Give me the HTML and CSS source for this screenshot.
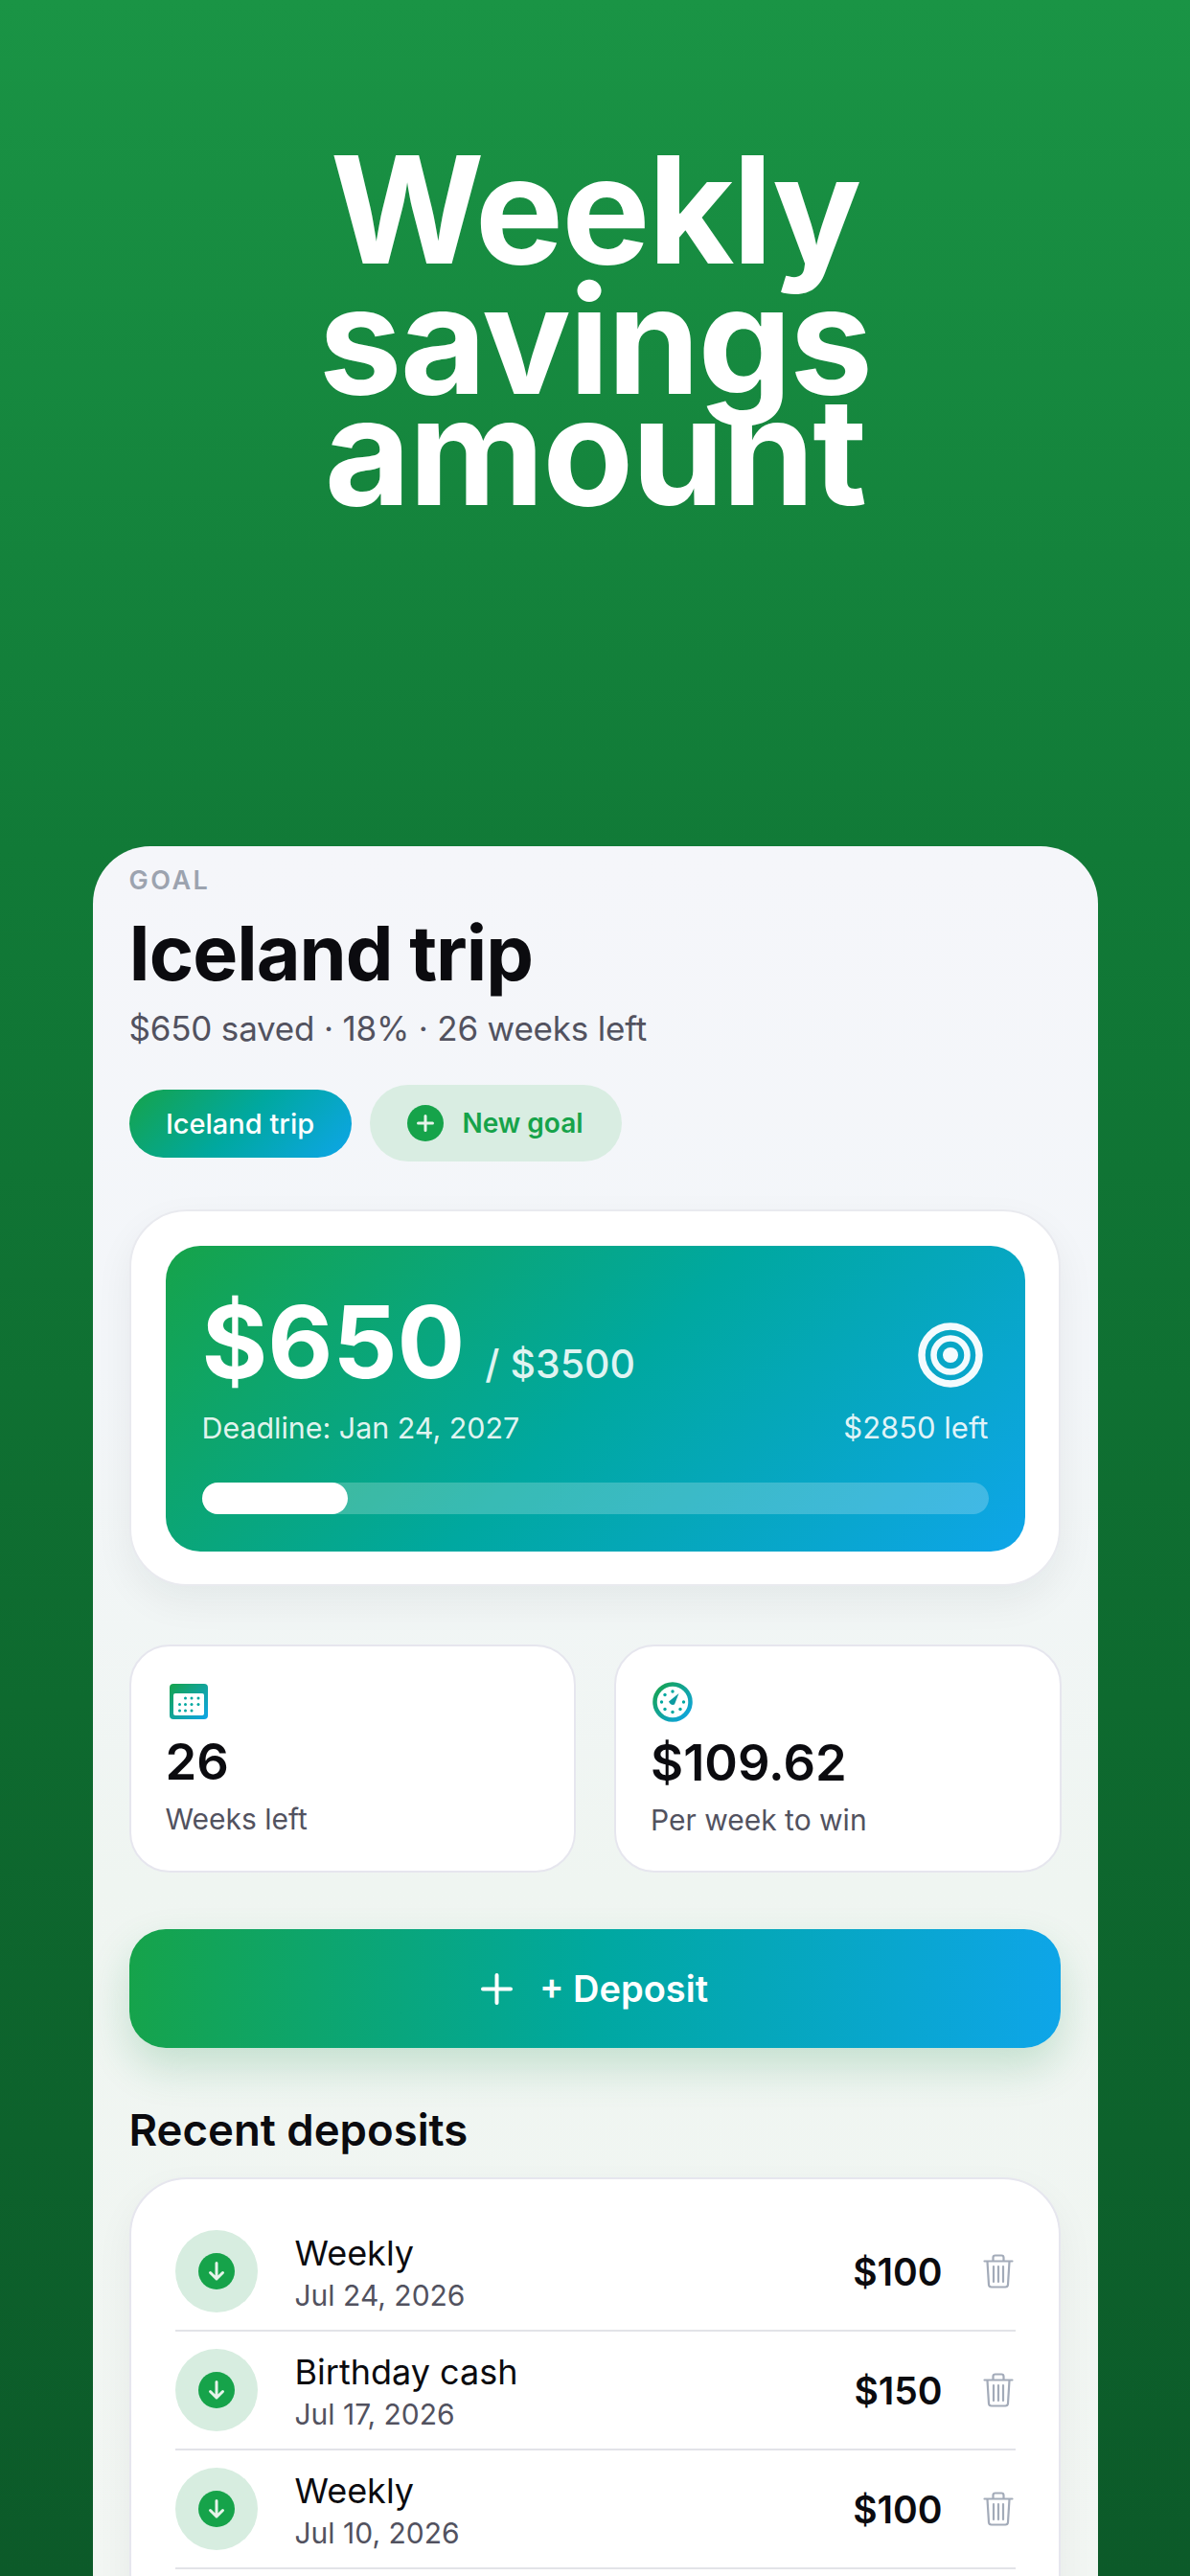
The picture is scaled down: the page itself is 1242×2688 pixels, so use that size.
FILE: index.html
```html
<!DOCTYPE html>
<html lang="en">
<head>
<meta charset="utf-8">
<title>Weekly savings amount</title>
<link rel="stylesheet" href="styles.css">
</head>
<body>
<svg class="defs" width="0" height="0" aria-hidden="true">
  <defs>
    <linearGradient id="brand" x1="0" y1="0" x2="1" y2="1">
      <stop offset="0" stop-color="#16a34a"/>
      <stop offset="1" stop-color="#0ea5e9"/>
    </linearGradient>
  </defs>
</svg>
<main class="screen">
  <h1 class="headline"><span class="hl hl-1">Weekly</span><span class="hl hl-2">savings</span><span class="hl hl-3">amount</span></h1>
  <section class="device">
    <div class="eyebrow">GOAL</div>
    <h2 class="goal-title">Iceland trip</h2>
    <p class="goal-sub">$650 saved · 18% · 26 weeks left</p>
    <div class="chips">
      <span class="chip chip-active">Iceland trip</span>
      <span class="chip chip-new">
        <svg class="chip-icon" viewBox="0 0 38 38"><circle cx="19" cy="19" r="19" fill="#16a34a"/><path d="M19 11.500V26.500M11.500 19H26.500" stroke="#e6f4ea" stroke-width="3" stroke-linecap="round"/></svg>
        New goal
      </span>
    </div>
    <div class="hero-wrap">
      <div class="hero">
        <div class="hero-top">
          <div class="hero-amount"><span class="amount-big">$650</span><span class="amount-of">/ $3500</span></div>
          <svg class="target" viewBox="0 0 68 68"><circle cx="34" cy="34" r="30" fill="none" stroke="#f3fbfe" stroke-width="7.500"/><circle cx="34" cy="34" r="17.500" fill="none" stroke="#f3fbfe" stroke-width="6.500"/><circle cx="34" cy="34" r="8" fill="#f3fbfe"/></svg>
        </div>
        <div class="hero-meta"><span>Deadline: Jan 24, 2027</span><span class="hero-left">$2850 left</span></div>
        <div class="bar"><div class="bar-fill" style="width:18.57%"></div></div>
      </div>
    </div>
    <div class="stats">
      <div class="stat">
        <svg class="stat-icon cal" viewBox="0 0 40 37">
          <rect width="40" height="37" rx="4" fill="url(#brand)"/>
          <rect x="4" y="10" width="32" height="23" rx="2" fill="#fff"/>
          <g fill="#00a8a0"><circle cx="16.500" cy="15" r="1.500"/><circle cx="23" cy="15" r="1.500"/><circle cx="30" cy="15" r="1.500"/><circle cx="10.500" cy="21.500" r="1.500"/><circle cx="16.500" cy="21.500" r="1.500"/><circle cx="23" cy="21.500" r="1.500"/><circle cx="30" cy="21.500" r="1.500"/><circle cx="10.500" cy="28" r="1.500"/><circle cx="16.500" cy="28" r="1.500"/><circle cx="23" cy="28" r="1.500"/></g>
        </svg>
        <div class="stat-value">26</div>
        <div class="stat-label">Weeks left</div>
      </div>
      <div class="stat">
        <svg class="stat-icon gauge" viewBox="0 0 42 42">
          <circle cx="21" cy="21" r="18.500" fill="none" stroke="url(#brand)" stroke-width="4.500"/>
          <g fill="#00a8a0"><circle cx="21" cy="10" r="1.700"/><circle cx="13" cy="13.500" r="1.700"/><circle cx="9.500" cy="21" r="1.700"/><circle cx="13" cy="28.500" r="1.700"/><circle cx="21" cy="31.500" r="1.700"/><circle cx="29" cy="28.500" r="1.700"/><circle cx="32.500" cy="21" r="1.700"/></g>
          <path d="M17 20.500 27.500 12 23 23.500Q19 25 17 20.500Z" fill="#0b9aa0"/>
        </svg>
        <div class="stat-value">$109.62</div>
        <div class="stat-label">Per week to win</div>
      </div>
    </div>
    <button class="deposit-btn" type="button">
      <svg class="deposit-plus" viewBox="0 0 33 33"><path d="M16.500 2V31M2 16.500H31" stroke="#fff" stroke-width="4" stroke-linecap="round"/></svg>
      <span>+ Deposit</span>
    </button>
    <h3 class="section-title">Recent deposits</h3>
    <div class="list">
      <div class="row">
        <div class="row-badge"><svg class="arrow" viewBox="0 0 38 38"><circle cx="19" cy="19" r="19" fill="#16a34a"/><path d="M19 10.500V27M12.500 20.500 19 27 25.500 20.500" fill="none" stroke="#e6f4ea" stroke-width="3" stroke-linecap="round" stroke-linejoin="round"/></svg></div>
        <div class="row-text"><div class="row-title">Weekly</div><div class="row-date">Jul 24, 2026</div></div>
        <div class="row-amount">$100</div>
        <svg class="trash" viewBox="0 0 32 36"><path d="M1.500 7.500H30.500M10.500 7V3.800Q10.500 1.500 12.800 1.500H19.200Q21.500 1.500 21.500 3.800V7M4.500 8 6 32Q6.200 34.500 8.800 34.500H23.200Q25.800 34.500 26 32L27.500 8M11 13V29M16 13V29M21 13V29" fill="none" stroke="#a3abb9" stroke-width="2.200" stroke-linecap="round"/></svg>
      </div>
      <div class="row">
        <div class="row-badge"><svg class="arrow" viewBox="0 0 38 38"><circle cx="19" cy="19" r="19" fill="#16a34a"/><path d="M19 10.500V27M12.500 20.500 19 27 25.500 20.500" fill="none" stroke="#e6f4ea" stroke-width="3" stroke-linecap="round" stroke-linejoin="round"/></svg></div>
        <div class="row-text"><div class="row-title">Birthday cash</div><div class="row-date">Jul 17, 2026</div></div>
        <div class="row-amount">$150</div>
        <svg class="trash" viewBox="0 0 32 36"><path d="M1.500 7.500H30.500M10.500 7V3.800Q10.500 1.500 12.800 1.500H19.200Q21.500 1.500 21.500 3.800V7M4.500 8 6 32Q6.200 34.500 8.800 34.500H23.200Q25.800 34.500 26 32L27.500 8M11 13V29M16 13V29M21 13V29" fill="none" stroke="#a3abb9" stroke-width="2.200" stroke-linecap="round"/></svg>
      </div>
      <div class="row">
        <div class="row-badge"><svg class="arrow" viewBox="0 0 38 38"><circle cx="19" cy="19" r="19" fill="#16a34a"/><path d="M19 10.500V27M12.500 20.500 19 27 25.500 20.500" fill="none" stroke="#e6f4ea" stroke-width="3" stroke-linecap="round" stroke-linejoin="round"/></svg></div>
        <div class="row-text"><div class="row-title">Weekly</div><div class="row-date">Jul 10, 2026</div></div>
        <div class="row-amount">$100</div>
        <svg class="trash" viewBox="0 0 32 36"><path d="M1.500 7.500H30.500M10.500 7V3.800Q10.500 1.500 12.800 1.500H19.200Q21.500 1.500 21.500 3.800V7M4.500 8 6 32Q6.200 34.500 8.800 34.500H23.200Q25.800 34.500 26 32L27.500 8M11 13V29M16 13V29M21 13V29" fill="none" stroke="#a3abb9" stroke-width="2.200" stroke-linecap="round"/></svg>
      </div>
    </div>
  </section>
</main>
</body>
</html>
```

FILE: styles.css
```css
* { box-sizing: border-box; }
html, body { margin: 0; padding: 0; }
body { font-family: Inter, "Liberation Sans", sans-serif; overflow: hidden; }
.defs { position: absolute; }
.screen {
  width: 1242px;
  height: 2688px;
  overflow: hidden;
  background: linear-gradient(180deg, #1a9445 0%, #117a37 33%, #0e6a2f 66%, #0c5a29 100%);
  display: flex;
  flex-direction: column;
  align-items: center;
}
.headline {
  margin: 0;
  flex: none;
  height: 883px;
  padding-top: 141px;
  width: 100%;
  display: flex;
  flex-direction: column;
  align-items: center;
  color: #fff;
  font-size: 155px;
  font-weight: 700;
  letter-spacing: -2px;
}
.hl { display: block; line-height: 116px; }
.hl-1 { line-height: 156px; }
.device {
  width: 1049px;
  flex: none;
  height: 1805px;
  border-radius: 60px 60px 0 0;
  background: linear-gradient(180deg, #f5f6fa 0%, #f3f6f9 30%, #eff5f1 60%, #f2f6f3 100%);
  padding: 20px 38px 0 38px;
}
.eyebrow {
  font-size: 27px;
  line-height: 32px;
  font-weight: 600;
  color: #9ca3af;
  letter-spacing: 2.500px;
}
.goal-title {
  margin: 12px 0 0;
  font-size: 79px;
  line-height: 94px;
  font-weight: 700;
  color: #0b0b0f;
  letter-spacing: -1px;
}
.goal-sub {
  margin: 11px 0 0;
  font-size: 35px;
  line-height: 42px;
  letter-spacing: -0.2px;
  color: #52525f;
}
.chips { display: flex; align-items: center; gap: 19px; margin-top: 38px; }
.chip {
  display: inline-flex;
  align-items: center;
  justify-content: center;
  border-radius: 999px;
  font-size: 28px;
  font-weight: 600;
}
.chip-active {
  width: 232px;
  height: 71px;
  font-size: 29px;
  font-weight: 500;
  color: #fff;
  background: linear-gradient(135deg, #16a34a, #00a8a0 50%, #0ea5e9);
}
.chip-new {
  width: 263px;
  height: 80px;
  gap: 19px;
  color: #16a34a;
  background: #d9ede2;
}
.chip-icon { width: 38px; height: 38px; }
.hero-wrap {
  margin-top: 50px;
  padding: 36px 35px 34px 36px;
  height: 393px;
  width: 972px;
  border-radius: 60px;
  background: #fff;
  border: 2px solid #e9eaef;
  box-shadow: 0 16px 40px rgba(20, 40, 30, 0.06);
}
.hero {
  height: 319px;
  border-radius: 36px;
  background: linear-gradient(135deg, #16a34a 0%, #00a8a0 50%, #0ea5e9 100%);
  padding: 0 38px;
  color: #fff;
}
.hero-top { display: flex; justify-content: space-between; align-items: flex-start; height: 172px; padding-top: 38px; }
.hero-amount { display: flex; align-items: baseline; gap: 21px; line-height: 124px; }
.amount-big { font-size: 105px; font-weight: 700; }
.amount-of { font-size: 41px; font-weight: 500; color: rgba(255, 255, 255, 0.88); }
.target { width: 68px; height: 68px; margin: 42px 6px 0 0; }
.hero-meta {
  display: flex;
  justify-content: space-between;
  font-size: 30.400px;
  line-height: 36px;
  color: rgba(255, 255, 255, 0.9);
}
.hero-left { font-size: 31px; }
.bar {
  margin-top: 39px;
  height: 33px;
  border-radius: 999px;
  background: rgba(255, 255, 255, 0.22);
}
.bar-fill { height: 100%; border-radius: 999px; background: #fff; }
.stats { display: grid; grid-template-columns: 1fr 1fr; gap: 40px; margin-top: 61px; width: 973px; }
.stat {
  height: 238px;
  border-radius: 42px;
  background: #fff;
  border: 2px solid #e6e6ee;
  padding: 39px 36px 0;
}
.stat-icon { display: block; }
.cal { width: 40px; height: 37px; margin-left: 4px; }
.gauge { width: 42px; height: 42px; margin-left: 2px; margin-top: -2px; }
.stat-value { font-size: 52.500px; line-height: 62px; font-weight: 600; color: #0b0b0f; margin-top: 13px; }
.gauge + .stat-value { margin-top: 11px; }
.stat-label { font-size: 30px; line-height: 36px; color: #52525f; margin-top: 11px; }
.deposit-btn {
  width: 972px;
  height: 124px;
  margin-top: 59px;
  border: 0;
  border-radius: 38px;
  display: flex;
  align-items: center;
  justify-content: center;
  gap: 28px;
  font-family: inherit;
  font-size: 38px;
  font-weight: 600;
  color: #fff;
  background: linear-gradient(95deg, #16a34a 0%, #00a8a0 50%, #0ea5e9 100%);
  box-shadow: 0 20px 44px rgba(22, 140, 70, 0.2);
}
.deposit-plus { width: 33px; height: 33px; }
.section-title {
  margin: 59px 0 0;
  font-size: 45.500px;
  line-height: 54px;
  font-weight: 600;
  color: #0b0b0f;
}
.list {
  width: 972px;
  margin-top: 22px;
  height: 700px;
  border-radius: 60px;
  background: #fff;
  border: 2px solid #e6e6ee;
  padding: 35px 45px 0 46px;
  box-shadow: 0 16px 40px rgba(20, 40, 30, 0.05);
}
.row {
  display: flex;
  align-items: center;
  height: 124px;
  border-bottom: 2px solid #e2e3e8;
}
.row-badge {
  width: 86px;
  height: 86px;
  border-radius: 50%;
  background: #d7ede0;
  display: flex;
  align-items: center;
  justify-content: center;
  flex: none;
}
.arrow { width: 38px; height: 38px; }
.row-text { flex: 1; margin-left: 39px; padding-top: 2px; }
.row-title { font-size: 36px; line-height: 42px; color: #0b0b0f; }
.row-date { font-size: 30px; line-height: 36px; color: #52525f; margin-top: 5px; }
.row-amount { font-size: 39px; font-weight: 600; color: #0b0b0f; margin-right: 42px; }
.trash { width: 32px; height: 36px; margin-right: 2px; }
```
